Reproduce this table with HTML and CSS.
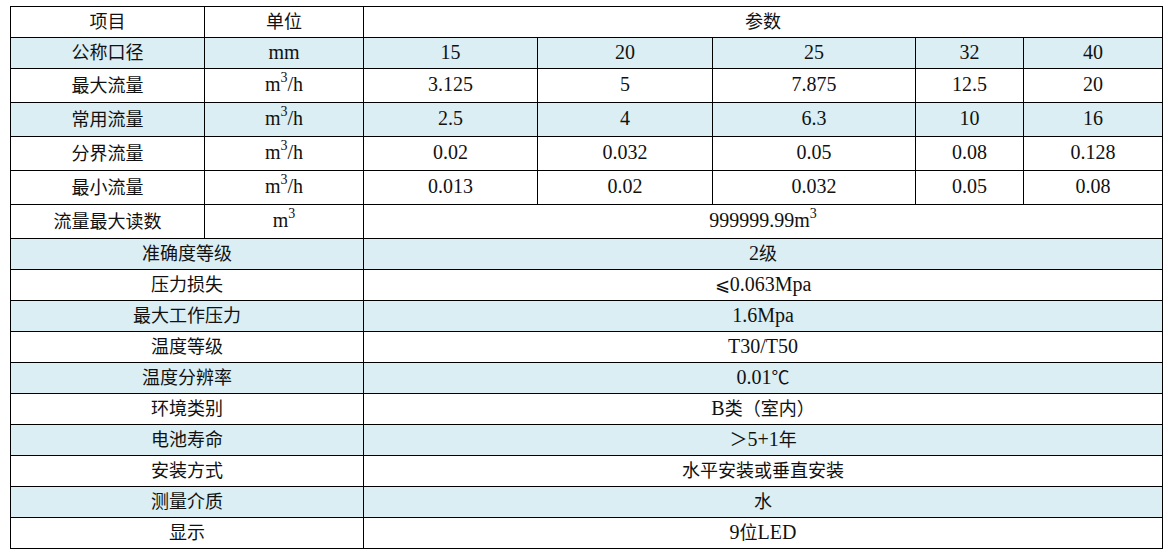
FILE: index.html
```html
<!DOCTYPE html>
<html lang="zh">
<head>
<meta charset="utf-8">
<link rel="stylesheet" href="styles.css">
</head>
<body>
<table class="spec">
<colgroup>
<col class="c1"><col class="c2"><col class="c3"><col class="c4"><col class="c5"><col class="c6"><col class="c7">
</colgroup>
<tr class="r31"><td><span class="zh">项目</span></td><td><span class="zh">单位</span></td><td colspan="5"><span class="zh">参数</span></td></tr>
<tr class="r31 blue"><td><span class="zh">公称口径</span></td><td>mm</td><td>15</td><td>20</td><td>25</td><td>32</td><td>40</td></tr>
<tr class="r34"><td><span class="zh">最大流量</span></td><td>m<sup>3</sup>/h</td><td>3.125</td><td>5</td><td>7.875</td><td>12.5</td><td>20</td></tr>
<tr class="r34 blue"><td><span class="zh">常用流量</span></td><td>m<sup>3</sup>/h</td><td>2.5</td><td>4</td><td>6.3</td><td>10</td><td>16</td></tr>
<tr class="r34"><td><span class="zh">分界流量</span></td><td>m<sup>3</sup>/h</td><td>0.02</td><td>0.032</td><td>0.05</td><td>0.08</td><td>0.128</td></tr>
<tr class="r34"><td><span class="zh">最小流量</span></td><td>m<sup>3</sup>/h</td><td>0.013</td><td>0.02</td><td>0.032</td><td>0.05</td><td>0.08</td></tr>
<tr class="r34"><td><span class="zh">流量最大读数</span></td><td>m<sup>3</sup></td><td colspan="5">999999.99m<sup>3</sup></td></tr>
<tr class="r31 blue"><td colspan="2"><span class="zh">准确度等级</span></td><td colspan="5">2<span class="zh">级</span></td></tr>
<tr class="r31"><td colspan="2"><span class="zh">压力损失</span></td><td colspan="5"><span class="zh">⩽</span>0.063Mpa</td></tr>
<tr class="r31 blue"><td colspan="2"><span class="zh">最大工作压力</span></td><td colspan="5">1.6Mpa</td></tr>
<tr class="r31"><td colspan="2"><span class="zh">温度等级</span></td><td colspan="5">T30/T50</td></tr>
<tr class="r31 blue"><td colspan="2"><span class="zh">温度分辨率</span></td><td colspan="5">0.01<span class="zh">℃</span></td></tr>
<tr class="r31"><td colspan="2"><span class="zh">环境类别</span></td><td colspan="5">B<span class="zh">类（室内）</span></td></tr>
<tr class="r31 blue"><td colspan="2"><span class="zh">电池寿命</span></td><td colspan="5"><span class="zh">＞</span>5+1<span class="zh">年</span></td></tr>
<tr class="r31"><td colspan="2"><span class="zh">安装方式</span></td><td colspan="5"><span class="zh">水平安装或垂直安装</span></td></tr>
<tr class="r31 blue"><td colspan="2"><span class="zh">测量介质</span></td><td colspan="5"><span class="zh">水</span></td></tr>
<tr class="r31"><td colspan="2"><span class="zh">显示</span></td><td colspan="5">9<span class="zh">位</span>LED</td></tr>
</table>
</body>
</html>
```
FILE: styles.css
```css
html, body {
  margin: 0;
  padding: 0;
  background: #ffffff;
}
body {
  padding: 6px 0 0 10px;
  font-family: "Liberation Serif", "Noto Sans CJK SC", serif;
  font-size: 20px;
  color: #111111;
}
.spec {
  border-collapse: collapse;
  table-layout: fixed;
  width: 1153px;
}
.c1 { width: 194px; }
.c2 { width: 159px; }
.c3 { width: 174px; }
.c4 { width: 175px; }
.c5 { width: 203px; }
.c6 { width: 108px; }
.c7 { width: 139px; }
.spec td {
  border: 1px solid #000000;
  padding: 0 0 3px 0;
  text-align: center;
  vertical-align: middle;
  line-height: 22px;
  white-space: nowrap;
}
.r31 td { height: 27px; }
.r34 td { height: 30px; }
.blue td { background: #daeef3; }
.zh {
  font-family: "Noto Sans CJK SC", sans-serif;
  font-size: 18px;
  font-weight: 400;
}
sup {
  font-size: 14px;
  line-height: 0;
  vertical-align: 9px;
}
```
